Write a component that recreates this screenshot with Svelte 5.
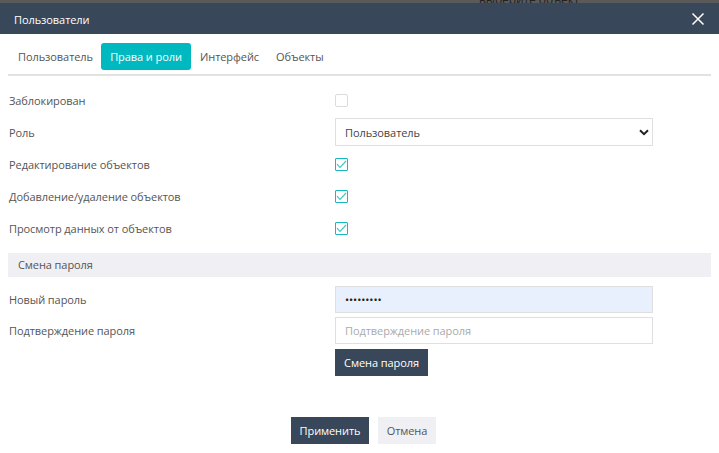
<script>
  const rows = [
    { label: 'Редактирование объектов' },
    { label: 'Добавление/удаление объектов' },
    { label: 'Просмотр данных от объектов' }
  ];
</script>

<div class="page">
  <div class="backdrop"><span>выберите объект</span></div>
  <header class="head">
    <span>Пользователи</span>
    <svg width="14" height="14" viewBox="0 0 14 14" aria-hidden="true"><path d="M1.5 1.5 12.5 12.5M12.5 1.5 1.5 12.5" stroke="#fff" stroke-width="1.5" fill="none"/></svg>
  </header>
  <main class="body">
    <nav class="tabs">
      <span class="tab first">Пользователь</span>
      <span class="tab active">Права и роли</span>
      <span class="tab third">Интерфейс</span>
      <span class="tab">Объекты</span>
    </nav>

    <div class="row">
      <span class="label">Заблокирован</span>
      <span class="box"></span>
    </div>
    <div class="row">
      <span class="label">Роль</span>
      <div class="select">
        <span>Пользователь</span>
        <svg width="10" height="7" viewBox="0 0 10 7" aria-hidden="true"><path d="M1 1.2 5 5.2 9 1.2" stroke="#222" stroke-width="2" fill="none"/></svg>
      </div>
    </div>
    {#each rows as r}
      <div class="row">
        <span class="label">{r.label}</span>
        <span class="box checked">
          <svg width="11" height="9" viewBox="0 0 11 9" aria-hidden="true"><path d="M1 4.2 4 7.4 10 1" stroke="#3cc4c9" stroke-width="1.1" fill="none"/></svg>
        </span>
      </div>
    {/each}

    <div class="section">Смена пароля</div>

    <div class="row pass">
      <span class="label">Новый пароль</span>
      <div class="input filled">•••••••••</div>
    </div>
    <div class="row pass second">
      <span class="label">Подтверждение пароля</span>
      <div class="input placeholder">Подтверждение пароля</div>
    </div>
    <div class="row change">
      <span class="label"></span>
      <button class="btn dark">Смена пароля</button>
    </div>

    <footer class="foot">
      <button class="btn dark apply">Применить</button>
      <button class="btn light">Отмена</button>
    </footer>
  </main>
</div>

<style>
  :global(body) { margin: 0; background: #fff; }
  .page {
    width: 719px;
    height: 453px;
    overflow: hidden;
    font-family: "Open Sans", "Noto Sans", sans-serif;
    font-size: 11px;
    letter-spacing: -0.08px;
    color: #555;
    background: #fff;
  }
  .backdrop {
    height: 3px;
    background: #5a5a5a;
    overflow: hidden;
    padding-left: 479px;
    font-size: 12px;
    line-height: 3px;
    color: #222;
  }
  .backdrop span { display: block; margin-top: -2px; }
  .head {
    height: 31px;
    box-sizing: border-box;
    padding: 1px 14px 0;
    background: #384759;
    color: #fff;
    display: flex;
    align-items: center;
    justify-content: space-between;
  }
  .body { padding: 0 8px; }
  .tabs {
    display: flex;
    height: 42px;
    padding-top: 9px;
    box-sizing: border-box;
    border-bottom: 2px solid #e2e2e2;
    width: 703px;
    margin-bottom: 8px;
  }
  .tab {
    height: 27px;
    line-height: 27px;
    padding: 0 9px;
    border-radius: 3px;
  }
  .tab.first { width: 93px; padding: 0 0 0 10px; box-sizing: border-box; }
  .tab.third { width: 76px; box-sizing: border-box; }
  .tab.active {
    background: #00b9c0;
    color: #fff;
    width: 90px;
    padding: 0;
    text-align: center;
    font-weight: 500;
  }
  .row {
    display: flex;
    align-items: center;
    height: 32px;
  }
  .label { width: 326px; padding-left: 1px; flex: none; }
  .box {
    width: 11px;
    height: 11px;
    border: 1px solid #dcdcdc;
    border-radius: 2px;
    display: flex;
    align-items: center;
    justify-content: center;
    background: #fff;
  }
  .box.checked { border-color: #16b9bf; border-radius: 1px; }
  .select, .input {
    width: 318px;
    height: 27px;
    box-sizing: border-box;
    border: 1px solid #dfdfdf;
    display: flex;
    align-items: center;
    padding: 0 9px;
    color: #444;
  }
  .select { justify-content: space-between; background: #fff; padding-right: 3px; height: 28px; }
  .section {
    height: 24px;
    line-height: 24px;
    background: #efeff4;
    width: 703px;
    padding-left: 10px;
    box-sizing: border-box;
    margin-top: 9px;
    margin-bottom: 9px;
  }
  .pass { height: 27px; }
  .second { margin-top: 4px; }
  .input.filled { background: #e8f0fe; color: #222; }
  .input.placeholder { color: #aaa; }
  .change { height: 27px; margin-top: 5px; }
  .btn {
    font-family: inherit;
    font-size: 11px;
    border: 0;
    padding: 0;
    height: 27px;
    text-align: center;
    line-height: 27px;
    letter-spacing: inherit;
  }
  .dark { background: #384759; color: #fff; width: 93px; }
  .foot {
    display: flex;
    gap: 9px;
    margin-top: 41px;
    padding-left: 283px;
  }
  .apply { width: 78px; }
  .light { background: #efeff4; color: #555; width: 58px; }
</style>
